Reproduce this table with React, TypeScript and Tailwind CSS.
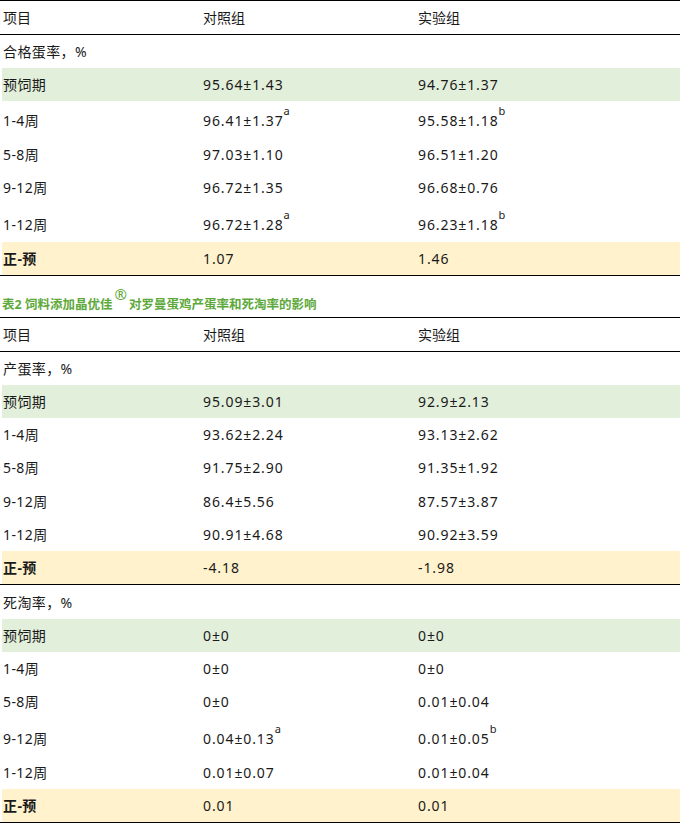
type Row = {
  label: string
  a?: string
  b?: string
  supA?: string
  supB?: string
  tone?: "green" | "yellow"
  h?: string
  pad?: string
  border?: boolean
}

const table1: Row[] = [
  { label: "合格蛋率，%" },
  { label: "预饲期", a: "95.64±1.43", b: "94.76±1.37", tone: "green" },
  { label: "1-4周", a: "96.41±1.37", b: "95.58±1.18", supA: "a", supB: "b", h: "h-[37px]", pad: "pt-[3px]" },
  { label: "5-8周", a: "97.03±1.10", b: "96.51±1.20" },
  { label: "9-12周", a: "96.72±1.35", b: "96.68±0.76" },
  { label: "1-12周", a: "96.72±1.28", b: "96.23±1.18", supA: "a", supB: "b", h: "h-[38px]", pad: "pt-[3px]" },
  { label: "正-预", a: "1.07", b: "1.46", tone: "yellow", border: true },
]

const table2: Row[] = [
  { label: "产蛋率，%" },
  { label: "预饲期", a: "95.09±3.01", b: "92.9±2.13", tone: "green" },
  { label: "1-4周", a: "93.62±2.24", b: "93.13±2.62" },
  { label: "5-8周", a: "91.75±2.90", b: "91.35±1.92" },
  { label: "9-12周", a: "86.4±5.56", b: "87.57±3.87", h: "h-[34px]", pad: "pt-[2px]" },
  { label: "1-12周", a: "90.91±4.68", b: "90.92±3.59" },
  { label: "正-预", a: "-4.18", b: "-1.98", tone: "yellow", border: true },
  { label: "死淘率，%", h: "h-[34px]", pad: "pt-[2px]" },
  { label: "预饲期", a: "0±0", b: "0±0", tone: "green" },
  { label: "1-4周", a: "0±0", b: "0±0" },
  { label: "5-8周", a: "0±0", b: "0.01±0.04" },
  { label: "9-12周", a: "0.04±0.13", b: "0.01±0.05", supA: "a", supB: "b", h: "h-[38px]", pad: "pt-[4px]" },
  { label: "1-12周", a: "0.01±0.07", b: "0.01±0.04" },
  { label: "正-预", a: "0.01", b: "0.01", tone: "yellow", border: true },
]

const Val = ({ v, sup }: { v?: string; sup?: string }) => (
  <span className="relative tracking-[0.9px]">
    {v}
    {sup && <span className="absolute -top-[6px] left-full text-[11px] tracking-normal">{sup}</span>}
  </span>
)

const Header = () => (
  <div className="flex h-[35px] items-center border-y border-black">
    <div className="w-[200px] pl-[3px]">项目</div>
    <div className="w-[215px] pl-[3px]">对照组</div>
    <div className="flex-1 pl-[3px]">实验组</div>
  </div>
)

const Body = ({ rows }: { rows: Row[] }) => (
  <div>
    {rows.map((r, i) => {
      const bg = r.tone === "green" ? "bg-[#e2efda]" : r.tone === "yellow" ? "bg-[#fff2cc]" : ""
      return (
        <div key={i} className={r.border ? "border-b border-black" : ""}>
          <div className={`ml-[2px] flex items-center ${r.h ?? "h-[33px]"} ${r.pad ?? ""} ${bg}`}>
            <div className={`w-[198px] pl-[1px] tracking-[0.4px] ${r.tone === "yellow" ? "font-bold" : ""}`}>
              {r.label}
            </div>
            <div className="w-[215px] pl-[3px]">
              <Val v={r.a} sup={r.supA} />
            </div>
            <div className="flex-1 pl-[3px]">
              <Val v={r.b} sup={r.supB} />
            </div>
          </div>
        </div>
      )
    })}
  </div>
)

export default function App() {
  return (
    <div
      className="w-[680px] bg-white text-[14px] leading-none text-[#1a1a1a]"
      style={{ fontFamily: '"Noto Sans", "Noto Sans CJK SC", sans-serif' }}
    >
      <Header />
      <Body rows={table1} />
      <div className="flex h-[41px] items-end pb-[6px] pl-[2px] text-[12.5px] font-bold text-[#5ea93b]">
        <span>表2 饲料添加晶优佳</span>
        <span className="relative -top-[9px] mx-[2px] text-[15px] font-normal">®</span>
        <span>对罗曼蛋鸡产蛋率和死淘率的影响</span>
      </div>
      <Header />
      <Body rows={table2} />
    </div>
  )
}
